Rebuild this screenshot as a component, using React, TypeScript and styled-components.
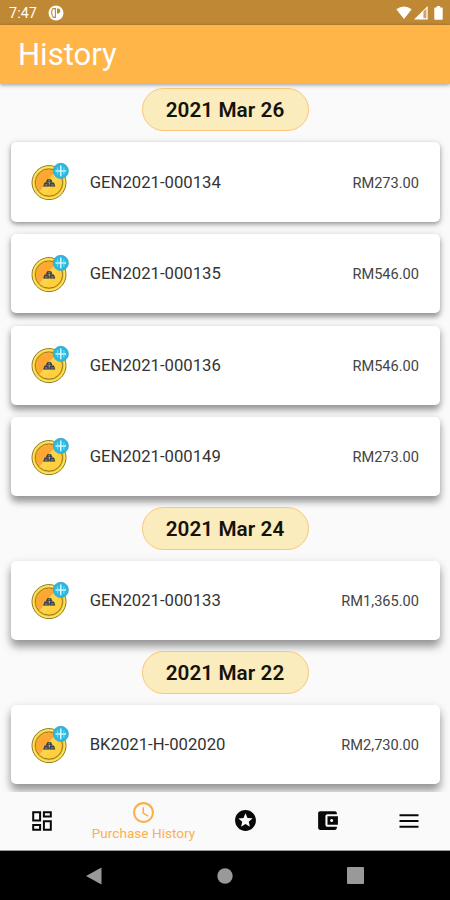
import React from 'react';
import styled, { createGlobalStyle } from 'styled-components';

const GlobalStyle = createGlobalStyle`
  *, *::before, *::after { box-sizing: border-box; }
  html, body { margin: 0; padding: 0; background: #000; }
  body { font-family: Roboto, 'Liberation Sans', sans-serif; }
`;

const Screen = styled.div`
  width: 450px;
  height: 900px;
  display: flex;
  flex-direction: column;
  overflow: hidden;
  background: #fafafa;
`;

const StatusBar = styled.header`
  flex: 0 0 25px;
  display: flex;
  align-items: center;
  justify-content: space-between;
  padding: 1px 7px 0 9px;
  background: #bf8834;
  color: #fff;
`;

const StatusGroup = styled.div<{ $gap: number }>`
  display: flex;
  align-items: center;
  gap: ${(p) => p.$gap}px;
  svg { display: block; }
`;

const Clock = styled.span`
  font-size: 14.3px;
  line-height: 24px;
  letter-spacing: 0.1px;
`;

const BatterySlot = styled.span`
  margin-left: 4px;
`;

const AppBar = styled.div`
  flex: 0 0 59px;
  display: flex;
  align-items: center;
  padding: 0 18px;
  background: #ffb547;
  box-shadow: 0 1px 4px rgba(0, 0, 0, 0.38);
  z-index: 1;
`;

const Title = styled.h1`
  margin: 0;
  color: #fff;
  font-size: 31px;
  font-weight: 400;
  line-height: 40px;
`;

const List = styled.main`
  flex: 1;
  min-height: 0;
  overflow: hidden;
  padding-top: 4.4px;
`;

const Group = styled.section`
  display: flex;
  flex-direction: column;
  align-items: center;
  padding-bottom: 10.8px;
`;

const DatePill = styled.h2`
  margin: 0 0 11.1px;
  width: 167px;
  height: 43px;
  display: flex;
  align-items: center;
  justify-content: center;
  border: 1px solid #fdc577;
  border-radius: 22px;
  background: #faecbd;
  color: #15120b;
  font-size: 20.7px;
  font-weight: 600;
  letter-spacing: 0.08px;
  padding-top: 1px;
  z-index: 1;
`;

const Cards = styled.div`
  width: 429px;
  display: flex;
  flex-direction: column;
  gap: 12.5px;
`;

const Card = styled.article<{ $depth: number }>`
  height: 79.1px;
  display: flex;
  align-items: center;
  padding: 0 20.5px 0 20px;
  border-radius: 5px;
  background: #fff;
  box-shadow:
    0 ${(p) => 2 + p.$depth * 5}px ${(p) => 4 + p.$depth * 4}px rgba(0, 0, 0, 0.34),
    0 2px 10px rgba(0, 0, 0, 0.13);
`;

const Reference = styled.span`
  flex: 1;
  margin-left: 19.2px;
  color: #333;
  font-size: 16.7px;
`;

const Amount = styled.span`
  padding-top: 1px;
  color: #444;
  font-size: 14.6px;
`;

const TabBar = styled.nav`
  flex: 0 0 59px;
  display: grid;
  grid-template-columns: 83px 121px 83px 81px 82px;
  background: #fafafa;
  border-bottom: 1px solid #999;
  z-index: 1;
`;

const Tab = styled.div<{ $active?: boolean }>`
  display: flex;
  flex-direction: column;
  align-items: center;
  justify-content: center;
  padding-bottom: 1px;
  color: ${(p) => (p.$active ? '#fcb04a' : '#080808')};
  svg { display: block; }
`;

const TabLabel = styled.span`
  font-size: 13.6px;
  line-height: 16px;
  white-space: nowrap;
`;

const SystemBar = styled.footer`
  flex: 0 0 49px;
  display: grid;
  grid-template-columns: 160px 130px 160px;
  place-items: center;
  background: #000;
  svg { display: block; }
`;

const BackSlot = styled.span`
  margin-left: 28px;
`;

const RecentSlot = styled.span`
  margin-right: 30px;
`;

const CoinIcon = () => (
  <svg width="40" height="40" viewBox="0 0 40 40">
    <circle cx="18" cy="20.6" r="17" fill="#e9bc22" stroke="#8f7932" strokeWidth="1" />
    <circle cx="18" cy="20.6" r="15.5" fill="none" stroke="#ffe35a" strokeWidth="1.6" />
    <circle cx="18" cy="20.6" r="13.6" fill="#ffcf3d" stroke="#967924" strokeWidth="1" />
    <path d="M5.6 24A12.8 12.8 0 0 1 24 9.3L14 28.6L9 29.6Q6.5 27.5 5.6 24Z" fill="#ffa733" />
    <path d="M24 9.5L29 14.5L13 32.4L8.5 29.6Z" fill="#ffd34b" />
    <path d="M15.4 20l1-2.5h3.6l1 2.5ZM12.6 24.2l1.2-3.4h3.6l.5 3.4ZM18.6 24.2l.5-3.4h3.6l1.2 3.4Z" fill="#3d4650" stroke="#263039" strokeWidth=".6" />
    <path d="M14 23h2.4M20.2 23h2.3M17.3 18.8h1.8" stroke="#a7b5b9" strokeWidth=".8" />
    <circle cx="29.8" cy="8.9" r="7.6" fill="#25b9e3" stroke="#4e9fb8" strokeWidth=".8" />
    <path d="M29.8 3.6v10.6M24.5 8.9h10.6" stroke="#d9f8ff" strokeWidth="1.5" />
    <path d="M26.7 5.3v7.2M32.9 5.3v7.2" stroke="#8be4f7" strokeWidth="1" />
  </svg>
);

const NoticeIcon = () => (
  <svg width="16" height="16" viewBox="0 0 16 16">
    <circle cx="8" cy="8" r="7.5" fill="#fff" />
    <path d="M6.4 3.6H5Q3.6 5 3.6 7.6T5.4 12.4H7.4V3.6Z" fill="none" stroke="#bf8834" strokeWidth="1.1" />
    <path d="M9 3.6h1.4q2 .4 2 2.4T10.4 8.4H9Z" fill="#bf8834" />
  </svg>
);

const WifiIcon = () => (
  <svg width="16" height="14" viewBox="0 0 16 14">
    <path d="M.3 3.3Q8-2.2 15.7 3.3L8 13Z" fill="#fff" />
  </svg>
);

const SignalIcon = () => (
  <svg width="14" height="14" viewBox="0 0 14 14">
    <path d="M0 13.5L13.7 0v13.5Z" fill="#fff" />
    <path d="M9.4 5.4l3-2.8v9.7h-3Z" fill="#cda56a" />
  </svg>
);

const BatteryIcon = () => (
  <svg width="9" height="14" viewBox="0 0 9 14">
    <path d="M2.8 0h3.4v1.4H8q.7 0 .7.7v11q0 .7-.7.7H1q-.7 0-.7-.7v-11q0-.7.7-.7h1.8Z" fill="#fff" />
  </svg>
);

const DashboardIcon = () => (
  <svg width="20" height="20" viewBox="0 0 20 20" fill="none" stroke="currentColor" strokeWidth="2">
    <path d="M1.2 1.2h6.9v8.2H1.2ZM11.9 1.2h6.9v4.4h-6.9ZM1.2 14h6.9v4.8H1.2ZM11.9 10.2h6.9v8.6h-6.9Z" />
  </svg>
);

const HistoryIcon = () => (
  <svg width="25" height="25" viewBox="0 0 24 24" fill="currentColor">
    <path d="M11.99 2C6.47 2 2 6.48 2 12s4.47 10 9.99 10C17.52 22 22 17.52 22 12S17.52 2 11.99 2ZM12 20c-4.42 0-8-3.58-8-8s3.58-8 8-8 8 3.58 8 8-3.58 8-8 8Zm.5-13H11v6l5.25 3.15.75-1.23-4.5-2.67Z" />
  </svg>
);

const StarsIcon = () => (
  <svg width="25" height="25" viewBox="0 0 24 24" fill="currentColor">
    <path d="M11.99 2C6.47 2 2 6.48 2 12s4.47 10 9.99 10C17.52 22 22 17.52 22 12S17.52 2 11.99 2Zm4.24 16L12 15.45 7.77 18l1.12-4.81-3.73-3.23 4.92-.42L12 5l1.92 4.53 4.92.42-3.73 3.23L16.23 18Z" />
  </svg>
);

const WalletIcon = () => (
  <svg width="25" height="25" viewBox="0 0 24 24" fill="currentColor">
    <path d="M21 18v1c0 1.1-.9 2-2 2H5c-1.11 0-2-.9-2-2V5c0-1.1.89-2 2-2h14c1.1 0 2 .9 2 2v1h-9c-1.11 0-2 .9-2 2v8c0 1.1.89 2 2 2h9Zm-9-2h10V8H12v8Zm4-2.5c-.83 0-1.5-.67-1.5-1.5s.67-1.5 1.5-1.5 1.5.67 1.5 1.5-.67 1.5-1.5 1.5Z" />
  </svg>
);

const MenuIcon = () => (
  <svg width="20" height="14" viewBox="0 0 20 14" stroke="currentColor" strokeWidth="1.9">
    <path d="M.5 1.3h19M.5 7h19M.5 12.7h19" />
  </svg>
);

type Entry = { reference: string; amount: string };
type Day = { date: string; entries: Entry[] };

const days: Day[] = [
  {
    date: '2021 Mar 26',
    entries: [
      { reference: 'GEN2021-000134', amount: 'RM273.00' },
      { reference: 'GEN2021-000135', amount: 'RM546.00' },
      { reference: 'GEN2021-000136', amount: 'RM546.00' },
      { reference: 'GEN2021-000149', amount: 'RM273.00' },
    ],
  },
  { date: '2021 Mar 24', entries: [{ reference: 'GEN2021-000133', amount: 'RM1,365.00' }] },
  { date: '2021 Mar 22', entries: [{ reference: 'BK2021-H-002020', amount: 'RM2,730.00' }] },
];

export default function App() {
  return (
    <>
      <GlobalStyle />
      <Screen>
        <StatusBar>
          <StatusGroup $gap={11}>
            <Clock>7:47</Clock>
            <NoticeIcon />
          </StatusGroup>
          <StatusGroup $gap={2}>
            <WifiIcon />
            <SignalIcon />
            <BatterySlot>
              <BatteryIcon />
            </BatterySlot>
          </StatusGroup>
        </StatusBar>
        <AppBar>
          <Title>History</Title>
        </AppBar>
        <List>
          {days.map((day, dayIndex) => (
            <Group key={day.date}>
              <DatePill>{day.date}</DatePill>
              <Cards>
                {day.entries.map((entry, i) => (
                  <Card key={entry.reference} $depth={dayIndex === 0 ? i / 4 : 1}>
                    <CoinIcon />
                    <Reference>{entry.reference}</Reference>
                    <Amount>{entry.amount}</Amount>
                  </Card>
                ))}
              </Cards>
            </Group>
          ))}
        </List>
        <TabBar>
          <Tab><DashboardIcon /></Tab>
          <Tab $active>
            <HistoryIcon />
            <TabLabel>Purchase History</TabLabel>
          </Tab>
          <Tab><StarsIcon /></Tab>
          <Tab><WalletIcon /></Tab>
          <Tab><MenuIcon /></Tab>
        </TabBar>
        <SystemBar>
          <BackSlot>
            <svg width="16" height="18" viewBox="0 0 16 18"><path d="M0 9L15.5 .5v17Z" fill="#999" /></svg>
          </BackSlot>
          <svg width="16" height="16" viewBox="0 0 16 16"><circle cx="8" cy="8" r="7.7" fill="#999" /></svg>
          <RecentSlot>
            <svg width="17" height="17" viewBox="0 0 17 17"><rect width="17" height="17" rx="1" fill="#999" /></svg>
          </RecentSlot>
        </SystemBar>
      </Screen>
    </>
  );
}
